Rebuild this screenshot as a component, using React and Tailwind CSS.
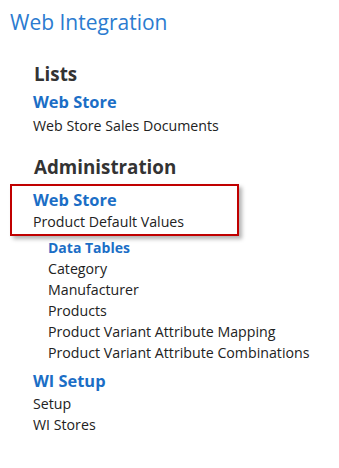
import React from 'react';

const dataTables = [
  'Category',
  'Manufacturer',
  'Products',
  'Product Variant Attribute Mapping',
  'Product Variant Attribute Combinations',
];

const App = () => {
  return (
    <div className="w-[339px] h-[468px] bg-white font-['Open_Sans',sans-serif] text-[#222]">
      <div className="pt-[8px] pl-[10px] text-[21px] leading-[28px] text-[#2b7bd0]">Web Integration</div>

      <div className="pl-[34px] mt-[26px] text-[18.8px] leading-[24px] font-bold text-[#333]">Lists</div>
      <div className="pl-[33px] mt-[6px] text-[16.4px] leading-[20px] font-bold text-[#1b6ec6]">Web Store</div>
      <div className="pl-[33px] mt-[4px] text-[14.2px] leading-[20px]">Web Store Sales Documents</div>

      <div className="pl-[34px] mt-[19px] text-[18.8px] leading-[24px] font-bold text-[#333]">Administration</div>

      <div className="ml-[10px] mt-[5px] w-[229px] h-[52px] border-2 border-[#c00000] shadow-[3px_3px_4px_rgba(0,0,0,0.3)] pl-[21px] pt-[4px]">
        <div className="text-[16.4px] leading-[20px] font-bold text-[#1b6ec6]">Web Store</div>
        <div className="mt-[2px] text-[14.2px] leading-[20px]">Product Default Values</div>
      </div>

      <div className="pl-[48px] mt-[1px]">
        <div className="text-[14px] leading-[21px] font-bold text-[#1b6ec6]">Data Tables</div>
        {dataTables.map((item) => (
          <div key={item} className="text-[14.2px] leading-[21px]">{item}</div>
        ))}
      </div>

      <div className="pl-[33px] mt-[7px] text-[16.4px] leading-[22px] font-bold text-[#1b6ec6]">WI Setup</div>
      <div className="pl-[33px] mt-[1px] text-[14.2px] leading-[21px]">Setup</div>
      <div className="pl-[33px] text-[14.2px] leading-[21px]">WI Stores</div>
    </div>
  );
};

export default App;
